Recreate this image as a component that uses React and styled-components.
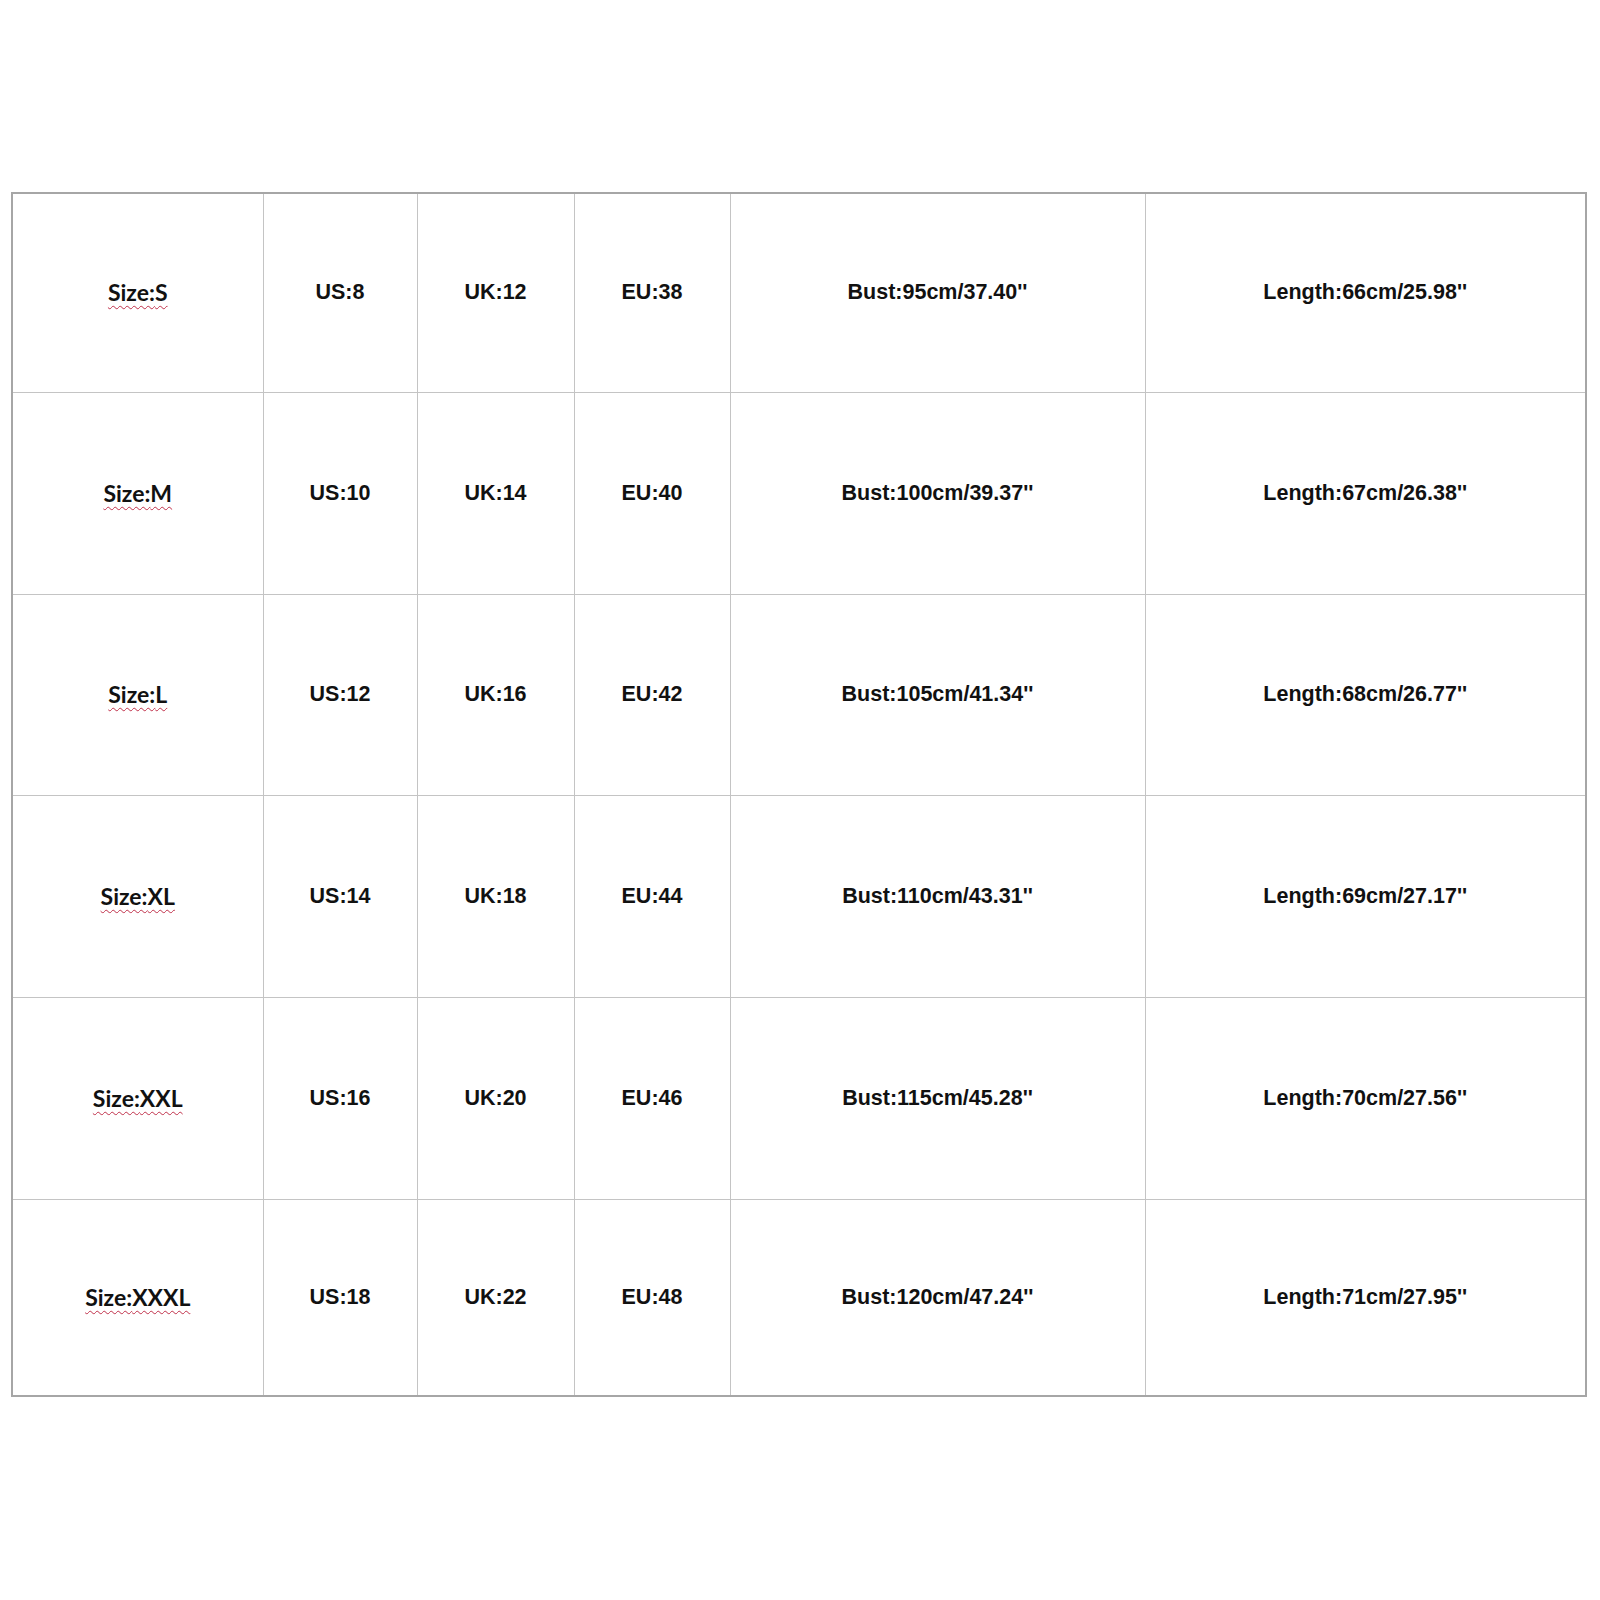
import React from 'react';
import styled, { createGlobalStyle } from 'styled-components';

const GlobalStyle = createGlobalStyle`
    html, body {
        margin: 0;
        padding: 0;
        background: #ffffff;
    }
`;

const Page = styled.div`
    width: 1600px;
    height: 1600px;
    padding: 192px 0 0 11px;
    box-sizing: border-box;
    background: #ffffff;
`;

const Table = styled.table`
    width: 1574px;
    border-collapse: collapse;
    table-layout: fixed;
    border: 2px solid #a6a6a6;
`;

const Row = styled.tr`
    height: ${props => props.$height}px;
`;

const Cell = styled.td`
    border: 1px solid #c4c4c4;
    padding: 0;
    text-align: center;
    vertical-align: middle;
    font-family: 'Liberation Sans', Arial, sans-serif;
    font-weight: bold;
    font-size: 21.5px;
    color: #111111;
`;

const SizeLabel = styled.span`
    font-family: Lato, 'Open Sans', sans-serif;
    font-weight: bold;
    font-size: 23px;
    color: #111111;
    text-decoration: underline wavy #c0304a;
    text-decoration-thickness: 1px;
    text-underline-offset: 4px;
`;

const columns = [251, 154, 157, 156, 415, 441];

const rows = [
    { size: 'S', us: 8, uk: 12, eu: 38, bust: '95cm/37.40', length: '66cm/25.98', height: 199 },
    { size: 'M', us: 10, uk: 14, eu: 40, bust: '100cm/39.37', length: '67cm/26.38', height: 202 },
    { size: 'L', us: 12, uk: 16, eu: 42, bust: '105cm/41.34', length: '68cm/26.77', height: 201 },
    { size: 'XL', us: 14, uk: 18, eu: 44, bust: '110cm/43.31', length: '69cm/27.17', height: 202 },
    { size: 'XXL', us: 16, uk: 20, eu: 46, bust: '115cm/45.28', length: '70cm/27.56', height: 202 },
    { size: 'XXXL', us: 18, uk: 22, eu: 48, bust: '120cm/47.24', length: '71cm/27.95', height: 197 },
];

const App = () => {
    return (
        <>
            <GlobalStyle />
            <Page>
                <Table>
                    <colgroup>
                        {columns.map((w, i) => (
                            <col key={i} style={{ width: w }} />
                        ))}
                    </colgroup>
                    <tbody>
                        {rows.map(row => (
                            <Row key={row.size} $height={row.height}>
                                <Cell>
                                    <SizeLabel>Size:{row.size}</SizeLabel>
                                </Cell>
                                <Cell>US:{row.us}</Cell>
                                <Cell>UK:{row.uk}</Cell>
                                <Cell>EU:{row.eu}</Cell>
                                <Cell>Bust:{row.bust}''</Cell>
                                <Cell>Length:{row.length}''</Cell>
                            </Row>
                        ))}
                    </tbody>
                </Table>
            </Page>
        </>
    );
};

export default App;
